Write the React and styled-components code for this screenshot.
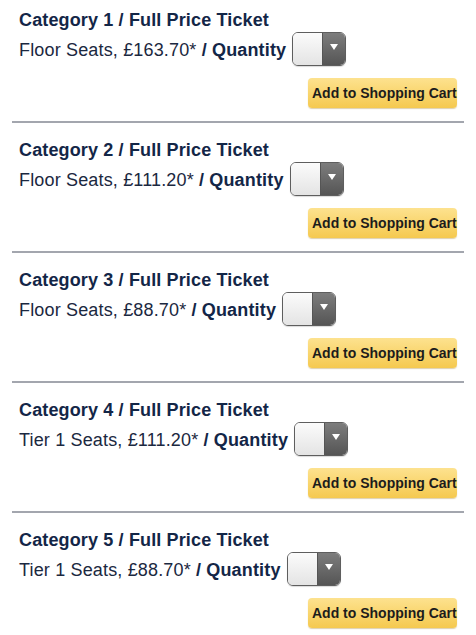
import React from 'react';
import styled, { createGlobalStyle } from 'styled-components';

const GlobalStyle = createGlobalStyle`
  body {
    margin: 0;
    background: #fff;
    font-family: "Liberation Sans", Arial, Helvetica, sans-serif;
  }
`;

const tickets = [
  { category: 1, seats: 'Floor Seats', price: '£163.70' },
  { category: 2, seats: 'Floor Seats', price: '£111.20' },
  { category: 3, seats: 'Floor Seats', price: '£88.70' },
  { category: 4, seats: 'Tier 1 Seats', price: '£111.20' },
  { category: 5, seats: 'Tier 1 Seats', price: '£88.70' },
];

const List = styled.div`
  width: 476px;
`;

const Section = styled.section`
  margin: 0 12px;
  padding: 10px 0 7px;
`;

const Content = styled.div`
  padding: 0 7px;
`;

const Title = styled.h2`
  margin: 0;
  font-size: 18px;
  line-height: 21px;
  font-weight: bold;
  letter-spacing: 0.14px;
  color: #132647;
`;

const Row = styled.div`
  display: flex;
  align-items: center;
  height: 34px;
  margin-top: 1px;
`;

const Label = styled.span`
  font-size: 18px;
  line-height: 21px;
  letter-spacing: 0.16px;
  color: #1b2840;
  padding-top: 3px;
  white-space: nowrap;

  b {
    color: #132647;
  }
`;

const Select = styled.div`
  display: flex;
  width: 54px;
  height: 34px;
  margin-left: 6px;
  box-sizing: border-box;
  border: 1px solid #5e5e5e;
  border-radius: 6px;
  overflow: hidden;
  box-shadow: 0 1px 1px rgba(0, 0, 0, 0.15);
`;

const SelectValue = styled.div`
  flex: 1;
  background: linear-gradient(#fbfbfb, #e4e4e4);
`;

const SelectArrow = styled.div`
  width: 22px;
  display: flex;
  align-items: center;
  justify-content: center;
  background: linear-gradient(#7d7d7d, #555);
  border-left: 1px solid #555;

  svg {
    display: block;
    margin-top: -4px;
  }
`;

const Actions = styled.div`
  display: flex;
  justify-content: flex-end;
  margin-top: 12px;
`;

const CartButton = styled.button`
  height: 30px;
  padding: 0 4px;
  width: 149px;
  border: none;
  border-radius: 4px;
  background: linear-gradient(#fde28f, #f5c94f);
  box-shadow: 0 1px 1px rgba(160, 120, 20, 0.35);
  font-family: inherit;
  font-size: 14px;
  font-weight: bold;
  color: #1c1c1c;
  white-space: nowrap;
`;

const Divider = styled.hr`
  margin: 13px 0 0;
  border: none;
  height: 2px;
  background: #a3a6ae;
`;

function QuantitySelect() {
  return (
    <Select>
      <SelectValue />
      <SelectArrow>
        <svg width="8" height="6" viewBox="0 0 8 6">
          <path d="M0 0h8L4 6z" fill="#fff" />
        </svg>
      </SelectArrow>
    </Select>
  );
}

export default function App() {
  return (
    <>
      <GlobalStyle />
      <List>
        {tickets.map((t) => (
          <Section key={t.category}>
            <Content>
              <Title>Category {t.category} / Full Price Ticket</Title>
              <Row>
                <Label>
                  {t.seats}, {t.price}* <b>/ Quantity</b>
                </Label>
                <QuantitySelect />
              </Row>
              <Actions>
                <CartButton>Add to Shopping Cart</CartButton>
              </Actions>
            </Content>
            <Divider />
          </Section>
        ))}
      </List>
    </>
  );
}
